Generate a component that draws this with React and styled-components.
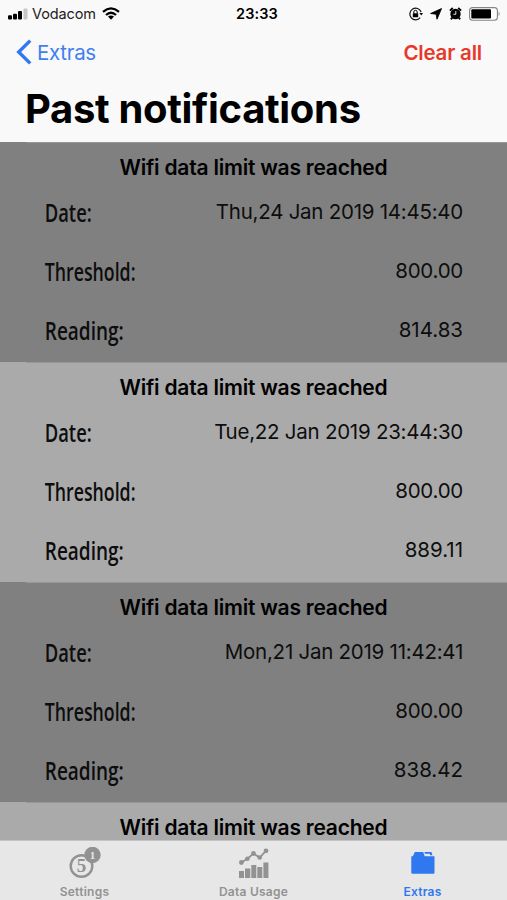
import React from 'react'
import styled, { createGlobalStyle } from 'styled-components'

const notifications = [
  { id: 1, date: 'Thu,24 Jan 2019 14:45:40', threshold: '800.00', reading: '814.83' },
  { id: 2, date: 'Tue,22 Jan 2019 23:44:30', threshold: '800.00', reading: '889.11' },
  { id: 3, date: 'Mon,21 Jan 2019 11:42:41', threshold: '800.00', reading: '838.42' },
  { id: 4 },
]

const SignalIcon = () => (
  <svg width="20" height="12" viewBox="0 0 20 12">
    <rect x="0" y="7.3" width="4" height="4.2" rx="1" />
    <rect x="5" y="5.7" width="4" height="5.8" rx="1" />
    <rect x="10" y="3" width="4" height="8.5" rx="1" />
    <rect x="15.5" y="0.5" width="4" height="11" rx="1" fill="#c6c6c6" />
  </svg>
)

const WifiIcon = () => (
  <svg width="18" height="13" viewBox="0 0 18 13">
    <g fill="none" stroke="#000" strokeWidth="2.3">
      <path d="M1 4.8Q9-2 17 4.8" />
      <path d="M4 8Q9 3.6 14 8" />
    </g>
    <path d="M6 9.6Q9 7.2 12 9.6L9 12.8z" />
  </svg>
)

const LockIcon = () => (
  <svg width="14" height="14" viewBox="0 0 14 14">
    <path
      d="M12.1 5A5.8 5.8 0 1 0 11.2 10.6"
      fill="none"
      stroke="#111"
      strokeWidth="1.2"
    />
    <path d="M10.4 6h3.6l-1.7 2.6z" />
    <rect x="3.8" y="6.3" width="5.4" height="4" rx="0.5" />
    <path
      d="M4.8 6.6V5a1.7 1.7 0 0 1 3.4 0v1.6"
      fill="none"
      stroke="#000"
      strokeWidth="1"
    />
  </svg>
)

const LocationIcon = () => (
  <svg width="12" height="12" viewBox="0 0 12 12">
    <path d="M11.5.6L7 11.2 6.2 6.2.6 5.5z" stroke="#000" strokeWidth="0.9" />
  </svg>
)

const AlarmIcon = () => (
  <svg width="13" height="13" viewBox="0 0 13 13">
    <circle cx="6.5" cy="7" r="5.2" />
    <path
      d="M.9 3.6L3.8 1M9.2 1l2.9 2.6M3.2 10.7l-1.3 1.6M9.8 10.7l1.3 1.6"
      stroke="#000"
      strokeWidth="1.9"
    />
    <path d="M6.8 4v3.3H4.4" fill="none" stroke="#f8f8f8" strokeWidth="0.9" />
  </svg>
)

const BatteryIcon = () => (
  <svg width="32" height="14" viewBox="0 0 32 14">
    <rect
      x="0.6"
      y="0.6"
      width="27.8"
      height="12.6"
      rx="3"
      fill="#fff"
      stroke="#858585"
      strokeWidth="1.1"
    />
    <rect x="2.3" y="2.2" width="19.7" height="9.4" rx="1" />
    <path d="M29.6 4.6q1.9 2.3 0 4.6z" fill="#858585" />
  </svg>
)

const BackIcon = () => (
  <svg width="16" height="26" viewBox="0 0 16 26">
    <path d="M14.2 1.6L2.7 13l11.5 11.4" fill="none" stroke="#2f78f0" strokeWidth="3.4" />
  </svg>
)

const SettingsIcon = () => (
  <svg width="32" height="32" viewBox="0 0 32 32">
    <circle cx="12.5" cy="19" r="10.8" fill="none" stroke="#929292" strokeWidth="2.4" />
    <IconText x="12.5" y="25" $size={19}>5</IconText>
    <circle cx="23.5" cy="8" r="8.2" fill="#929292" />
    <IconText x="23.5" y="11.8" $size={11} $light>1</IconText>
  </svg>
)

const UsageIcon = () => (
  <svg width="32" height="32" viewBox="0 0 32 32" fill="#929292">
    <path d="M1 24h5v7H1zM7 21.5h5.3V31H7zM13.3 18h5v13h-5zM19.3 20h5v11h-5zM25.4 15.5h5V31h-5z" />
    <path d="M3.4 15.5l6-3.8 6.1-5.2 6.2 4 6.2-6.7" fill="none" stroke="#929292" strokeWidth="1.8" />
    <circle cx="3.4" cy="15.5" r="2.4" />
    <circle cx="9.4" cy="11.7" r="2.3" />
    <circle cx="15.5" cy="6.5" r="2.4" />
    <circle cx="21.7" cy="10.5" r="2.3" />
    <circle cx="28" cy="3.8" r="2.4" />
  </svg>
)

const FolderIcon = () => (
  <svg width="24" height="24" viewBox="0 0 24 24" fill="#2f78f0">
    <path d="M.3 5.3h1.6L3.8.9h8.4l1.5 4.4h9.8v16.5q0 1-1 1H1.3q-1 0-1-1z" />
    <path d="M13.4.9h6.7q.8 0 1.3 3.4h-2.2l-.5-1.5h-4.7z" />
  </svg>
)

const Notification = ({ item, dark }) => (
  <Card $dark={dark}>
    <Separator />
    <CardTitle>Wifi data limit was reached</CardTitle>
    {item.date && (
      <>
        <Row>
          <Label $stretch={0.735}>Date:</Label>
          <Value>{item.date}</Value>
        </Row>
        <Row>
          <Label $stretch={0.71}>Threshold:</Label>
          <Value>{item.threshold}</Value>
        </Row>
        <Row>
          <Label $stretch={0.76}>Reading:</Label>
          <Value $wide>{item.reading}</Value>
        </Row>
      </>
    )}
  </Card>
)

const App = () => (
  <Screen>
    <GlobalStyle />
    <StatusBar>
      <Carrier>
        <SignalIcon />
        <span>Vodacom</span>
        <WifiIcon />
      </Carrier>
      <Clock>23:33</Clock>
      <Indicators>
        <LockIcon />
        <LocationIcon />
        <AlarmIcon />
        <BatteryIcon />
      </Indicators>
    </StatusBar>
    <NavBar>
      <BackButton>
        <BackIcon />
        Extras
      </BackButton>
      <ClearButton>Clear all</ClearButton>
    </NavBar>
    <Heading>Past notifications</Heading>
    <List>
      {notifications.map((item, i) => (
        <Notification key={item.id} item={item} dark={i % 2 === 0} />
      ))}
    </List>
    <TabBar>
      <Tab>
        <TabIcon><SettingsIcon /></TabIcon>
        Settings
      </Tab>
      <Tab>
        <TabIcon><UsageIcon /></TabIcon>
        Data Usage
      </Tab>
      <Tab $active>
        <TabIcon><FolderIcon /></TabIcon>
        Extras
      </Tab>
    </TabBar>
  </Screen>
)

const GlobalStyle = createGlobalStyle`
  body {
    margin: 0;
    font-family: Inter, 'Liberation Sans', sans-serif;
    color: #000;
  }
  * {
    box-sizing: border-box;
  }
  svg {
    display: block;
    flex-shrink: 0;
  }
`

const Screen = styled.div`
  display: flex;
  flex-direction: column;
  width: 507px;
  height: 900px;
  overflow: hidden;
  background: #f9f9f9;
`

const StatusBar = styled.div`
  display: grid;
  grid-template-columns: 1fr auto 1fr;
  align-items: center;
  height: 27px;
  padding: 0 6px 0 8px;
`

const Carrier = styled.div`
  display: flex;
  align-items: center;
  gap: 4px;
  font-size: 14.5px;
  letter-spacing: -0.1px;
  color: #222;
  span {
    margin-right: 2px;
  }
`

const Clock = styled.div`
  padding-left: 5px;
  font-size: 14.5px;
  font-weight: 600;
  letter-spacing: 0.1px;
`

const Indicators = styled.div`
  display: flex;
  align-items: center;
  justify-content: flex-end;
  gap: 7px;
`

const NavBar = styled.div`
  display: flex;
  align-items: center;
  justify-content: space-between;
  height: 50px;
  padding: 0 25px 0 16px;
`

const NavButton = styled.button`
  display: flex;
  align-items: center;
  padding: 0;
  border: 0;
  background: none;
  font-family: inherit;
  font-size: 20.5px;
`

const BackButton = styled(NavButton)`
  gap: 5px;
  color: #3f7ff0;
  letter-spacing: -0.3px;
`

const ClearButton = styled(NavButton)`
  color: #e8382b;
  font-weight: 600;
  letter-spacing: -0.2px;
`

const Heading = styled.h1`
  height: 65px;
  margin: 0;
  padding-left: 25px;
  line-height: 64px;
  font-size: 40px;
  font-weight: 700;
  letter-spacing: -0.33px;
`

const List = styled.div`
  flex: 1;
  min-height: 0;
  overflow: hidden;
`

const Card = styled.section`
  height: 220px;
  padding: 0 44px;
  background: ${(props) => (props.$dark ? '#808080' : '#aaaaaa')};
`

const Separator = styled.div`
  height: 1px;
  margin: 0 -44px 8px -18px;
  background: #979797;
`

const CardTitle = styled.h2`
  height: 32px;
  margin: 0;
  line-height: 34px;
  text-align: center;
  font-size: 21px;
  font-weight: 600;
  letter-spacing: -0.22px;
`

const Row = styled.div`
  display: flex;
  align-items: center;
  justify-content: space-between;
  height: 58.67px;
  color: #0d0d0d;
`

const Label = styled.span`
  padding-left: 1px;
  font-family: Noteworthy, 'Open Sans', sans-serif;
  font-size: 25px;
  font-weight: 600;
  transform: scaleX(${(props) => props.$stretch});
  transform-origin: left;
`

const Value = styled.span`
  padding-bottom: 1px;
  font-size: 20.5px;
  letter-spacing: ${(props) => (props.$wide ? '0' : '-0.25px')};
`

const TabBar = styled.nav`
  display: grid;
  grid-template-columns: repeat(3, 1fr);
  flex-shrink: 0;
  height: 60px;
  background: #e7e7e7;
  border-top: 1px solid #c4c4c4;
`

const Tab = styled.div`
  display: flex;
  flex-direction: column;
  align-items: center;
  padding-top: 6px;
  font-size: 12px;
  font-weight: 600;
  line-height: 16px;
  letter-spacing: 0.25px;
  color: ${(props) => (props.$active ? '#2f78f0' : '#929292')};
`

const TabIcon = styled.div`
  display: flex;
  align-items: center;
  justify-content: center;
  height: 32px;
  margin-bottom: 5px;
`

const IconText = styled.text`
  font-family: 'Liberation Serif', serif;
  font-size: ${(props) => props.$size}px;
  font-weight: 700;
  letter-spacing: 0;
  text-anchor: middle;
  fill: ${(props) => (props.$light ? '#e7e7e7' : '#929292')};
`

export default App
